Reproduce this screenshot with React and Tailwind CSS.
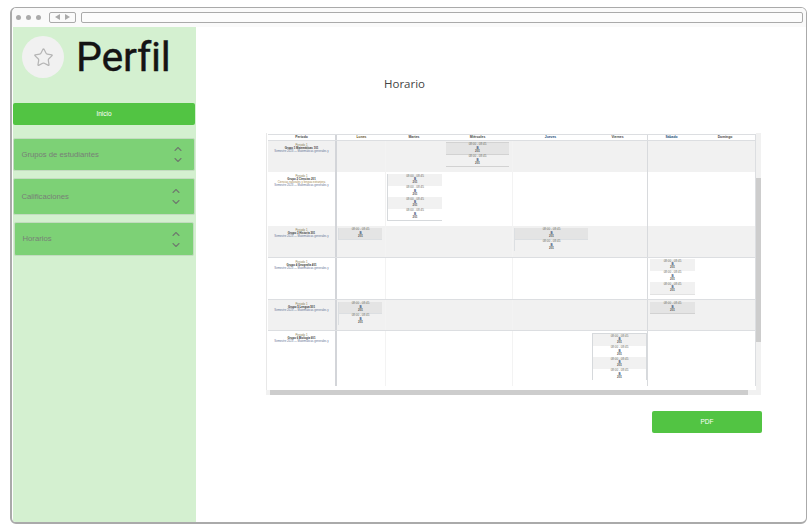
import React from "react";
import { Star, ChevronUp, ChevronDown } from "lucide-react";

const COLS = "grid-cols-[69px_49px_56px_71px_75px_60px_47px_61px]";

function Tiny({ lines }) {
  return (
    <div className="flex flex-col items-center font-['Liberation_Sans',sans-serif] text-[3px] leading-[3.3px] text-[#444]">
      <span className="whitespace-nowrap text-[#6b6b5f]">{lines[0]}</span>
      <span className="font-bold text-[#39527a]">{lines[1]}</span>
      <span className="font-bold text-[#555]">{lines[2]}</span>
    </div>
  );
}

function PeriodCell({ name, extra, tall }) {
  return (
    <div className="flex h-full flex-col items-center border-r-2 border-[#d3d5d9] pt-[3px] font-['Liberation_Sans',sans-serif] text-[2.8px] leading-[2.9px] text-[#555]">
      <span className="text-[#8a7a50]">Periodo 1</span>
      <span className="whitespace-nowrap font-bold text-[#333]">{name}</span>
      {tall && <span className="whitespace-nowrap text-[#a8884c]">{tall}</span>}
      <span className="whitespace-nowrap text-[#5f7295]">{extra}</span>
    </div>
  );
}

function Block({ lines, tone, edge }) {
  const tones = {
    dark: "bg-[#e4e4e4] border-b border-[#d2d2d2]",
    mid: "bg-[#f1f1f1]",
    white: "bg-white",
    none: "",
  };
  return (
    <div className={`flex h-[11.5px] items-center justify-center ${tones[tone]} ${edge ? "border-l border-[#dcdfe2]" : ""}`}>
      <Tiny lines={lines} />
    </div>
  );
}

const L = ["08:00 - 08:45", "B", "201"];
const EXTRA = "Semestre 2023 — Matemáticas generales y";

function Lun({ children, className = "" }) {
  return <div className={`h-full border-r border-[#f3f3f3] ${className}`}>{children}</div>;
}
function Mie({ children, className = "" }) {
  return <div className={`h-full border-r border-[#f3f3f3] ${className}`}>{children}</div>;
}
function Vie({ children, className = "" }) {
  return <div className={`h-full border-r-[1.5px] border-[#d8dadd] ${className}`}>{children}</div>;
}
function Dom() {
  return <div className="h-full border-r-[1.5px] border-[#dcdee1]" />;
}

function Row({ h, tint, line, children }) {
  return (
    <div className={`grid ${COLS} ${h} ${tint ? "bg-[#f1f1f1]" : "bg-white"} ${line ? "border-b border-[#dcdee1]" : ""}`}>
      {children}
    </div>
  );
}

function Horario() {
  return (
    <div className="flex h-[262px] w-[495px] flex-col">
      <div className="flex min-h-0 flex-1">
        <div className="flex w-[490px] flex-col border-l border-[#e8e8e8] pl-px pt-px">
          <div className={`grid ${COLS} h-[7px] border-b-[1.5px] border-t border-[#dcdee1] font-['Liberation_Sans',sans-serif] text-[3.4px] font-bold leading-[4.5px] text-[#444]`}>
            <div className="border-r-2 border-[#d3d5d9] text-center">Periodo</div>
            <div className="text-center text-[#6a5020]">Lunes</div>
            <div className="text-center">Martes</div>
            <div className="text-center">Miércoles</div>
            <div className="text-center text-[#254a7a]">Jueves</div>
            <div className="border-r-[1.5px] border-[#d8dadd] text-center">Viernes</div>
            <div className="text-center text-[#254a7a]">Sábado</div>
            <div className="border-r-[1.5px] border-[#dcdee1] text-center">Domingo</div>
          </div>

          <Row h="h-[31px]" tint>
            <PeriodCell name="Grupo 1 Matemáticas 101" extra={EXTRA} />
            <Lun />
            <div />
            <Mie className="pl-[4px] pr-[3px] pt-px">
              <div className="border-t border-[#d2d2d2]"><Block lines={L} tone="dark" /></div>
              <div className="border-b border-[#d2d2d2]"><Block lines={L} tone="none" /></div>
            </Mie>
            <div />
            <Vie />
            <div />
            <Dom />
          </Row>

          <Row h="h-[54px]">
            <PeriodCell name="Grupo 2 Ciencias 201" tall="Ciencias naturales y lengua extranjera" extra={EXTRA} />
            <Lun />
            <div className="pl-px pt-[2px]">
              <div className="border-b border-l border-[#d6d9dc]">
                <Block lines={L} tone="mid" />
                <Block lines={L} tone="white" />
                <Block lines={L} tone="mid" />
                <Block lines={L} tone="white" />
              </div>
            </div>
            <Mie />
            <div />
            <Vie />
            <div />
            <Dom />
          </Row>

          <Row h="h-[32px]" tint line>
            <PeriodCell name="Grupo 3 Historia 301" extra={EXTRA} />
            <Lun className="pl-px pr-[3px] pt-[2px]"><Block lines={L} tone="dark" edge /></Lun>
            <div />
            <Mie />
            <div className="pl-px pt-[2px]">
              <Block lines={L} tone="dark" edge />
              <Block lines={L} tone="none" edge />
            </div>
            <Vie />
            <div />
            <Dom />
          </Row>

          <Row h="h-[42px]" line>
            <PeriodCell name="Grupo 4 Geografía 401" extra={EXTRA} />
            <Lun />
            <div />
            <Mie />
            <div />
            <Vie />
            <div className="pl-[2px] pt-px">
              <Block lines={L} tone="mid" />
              <Block lines={L} tone="white" />
              <div className="border-b border-[#e2e2e2]"><Block lines={L} tone="mid" /></div>
            </div>
            <Dom />
          </Row>

          <Row h="h-[31px]" tint line>
            <PeriodCell name="Grupo 5 Lengua 501" extra={EXTRA} />
            <Lun className="pl-px pr-[3px] pt-[2px]">
              <Block lines={L} tone="dark" edge />
              <Block lines={L} tone="none" edge />
            </Lun>
            <div />
            <Mie />
            <div />
            <Vie />
            <div className="pl-[2px] pt-[2px]"><Block lines={L} tone="dark" /></div>
            <Dom />
          </Row>

          <Row h="h-[55px]">
            <PeriodCell name="Grupo 6 Biología 601" extra={EXTRA} />
            <Lun />
            <div />
            <Mie />
            <div />
            <Vie className="pl-[4px] pt-[2px]">
              <div className="border-l border-r border-t border-[#d6d9dc]">
                <Block lines={L} tone="mid" />
                <Block lines={L} tone="white" />
                <Block lines={L} tone="mid" />
                <Block lines={L} tone="white" />
              </div>
            </Vie>
            <div />
            <Dom />
          </Row>
        </div>

        <div className="flex w-[5px] flex-col bg-[#f1f1f1]">
          <div className="h-[45px] shrink-0" />
          <div className="h-[164px] shrink-0 bg-[#cdcdcd]" />
        </div>
      </div>

      <div className="flex h-[5px] w-[495px] bg-[#f1f1f1]">
        <div className="w-[4px]" />
        <div className="w-[478px] bg-[#cdcdcd]" />
      </div>
    </div>
  );
}

function Accordion({ label, h, mt, inset, right }) {
  return (
    <div className={`${mt} ${inset ? "ml-px w-[180px]" : "w-[182px]"} ${h} flex items-center justify-between rounded-[2px] border border-[#c3dcc0] bg-[#7dd176] pl-[7.5px] ${right} font-['Liberation_Sans',sans-serif] text-[7.7px] text-[#787f77]`}>
      <span>{label}</span>
      <div className="flex flex-col items-center text-[#6f7a6e]">
        <ChevronUp size={12} strokeWidth={2.2} className="-mb-[1px]" />
        <ChevronDown size={12} strokeWidth={2.2} />
      </div>
    </div>
  );
}

export default function App() {
  return (
    <div className="h-[530px] w-[812px] bg-white pl-[10px] pt-[7px]">
      <div className="flex h-[517px] w-[797px] flex-col overflow-hidden rounded-[6px] border-b-2 border-l-2 border-r border-t border-[#aaaaaa] bg-white">
        <div className="flex h-[19px] shrink-0 items-center bg-[#fafafa] pb-[1px] pl-[4px] pr-[3px]">
          <div className="flex gap-[5px]">
            <div className="size-[5px] rounded-full bg-[#aaaaaa]" />
            <div className="size-[5px] rounded-full bg-[#aaaaaa]" />
            <div className="size-[5px] rounded-full bg-[#aaaaaa]" />
          </div>
          <div className="ml-[8px] flex h-[11px] w-[27px] items-center justify-center gap-[5px] rounded-[2px] border border-[#aaaaaa]">
            <div className="size-0 border-y-[3.5px] border-r-[5px] border-y-transparent border-r-[#aaaaaa]" />
            <div className="size-0 border-y-[3.5px] border-l-[5px] border-y-transparent border-l-[#aaaaaa]" />
          </div>
          <div className="ml-[5px] h-[11px] flex-1 rounded-[2px] border border-[#aaaaaa] bg-[#fcfcfc]" />
        </div>

        <div className="flex min-h-0 flex-1">
          <aside className="ml-px flex h-[495px] w-[183px] shrink-0 flex-col bg-[#d4f0d0]">
            <div className="flex items-center pl-[9px] pt-[9px]">
              <div className="flex size-[42px] items-center justify-center rounded-full bg-[#f1f1f1]">
                <Star size={21} strokeWidth={1.4} className="text-[#b5b5b5]" />
              </div>
              <h1 className="ml-[12px] font-['Roboto',sans-serif] text-[41px] font-normal leading-[42px] tracking-[-0.2px] text-[#141414] [font-variant-ligatures:none] [-webkit-text-stroke:0.4px_#141414]">Perfil</h1>
            </div>
            <button className="mt-[25px] h-[22px] w-[182px] rounded-[2px] bg-[#52c443] font-['Liberation_Sans',sans-serif] text-[6.5px] text-white">
              Inicio
            </button>
            <Accordion label="Grupos de estudiantes" h="h-[33px]" mt="mt-[13px]" right="pr-[10px]" />
            <Accordion label="Calificaciones" h="h-[37px]" mt="mt-[7px]" right="pr-[12px]" />
            <Accordion label="Horarios" h="h-[34px]" mt="mt-[7px]" inset right="pr-[11px]" />
          </aside>

          <main className="flex min-w-0 flex-1 flex-col pl-[70px]">
            <h2 className="ml-[118px] mt-[49px] font-['Open_Sans',sans-serif] text-[11.5px] leading-[16px] text-[#444444]">Horario</h2>
            <div className="mt-[41px]">
              <Horario />
            </div>
            <button className="ml-[386px] mt-[16px] h-[22px] w-[110px] rounded-[2px] bg-[#52c443] font-['Liberation_Sans',sans-serif] text-[6.5px] text-white">
              PDF
            </button>
          </main>
        </div>
      </div>
    </div>
  );
}
